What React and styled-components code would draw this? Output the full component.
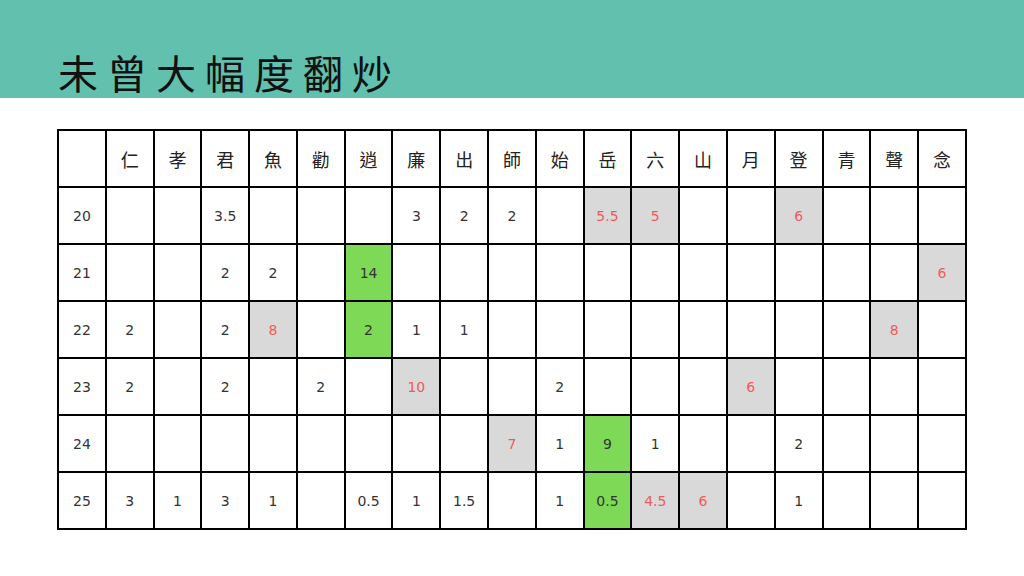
import React from 'react';
import styled, { createGlobalStyle } from 'styled-components';

const GlobalStyle = createGlobalStyle`
  html, body {
    margin: 0;
    padding: 0;
    background: #ffffff;
  }
`;

const heads = ['仁', '孝', '君', '魚', '勸', '逍', '廉', '出', '師', '始', '岳', '六', '山', '月', '登', '青', '聲', '念'];

// value per column; g = green, r = gray with red text
const rows = [
  { year: 20, cells: { 2: '3.5', 6: '3', 7: '2', 8: '2', 10: ['5.5', 'r'], 11: ['5', 'r'], 14: ['6', 'r'] } },
  { year: 21, cells: { 2: '2', 3: '2', 5: ['14', 'g'], 17: ['6', 'r'] } },
  { year: 22, cells: { 0: '2', 2: '2', 3: ['8', 'r'], 5: ['2', 'g'], 6: '1', 7: '1', 16: ['8', 'r'] } },
  { year: 23, cells: { 0: '2', 2: '2', 4: '2', 6: ['10', 'r'], 9: '2', 13: ['6', 'r'] } },
  { year: 24, cells: { 8: ['7', 'r'], 9: '1', 10: ['9', 'g'], 11: '1', 14: '2' } },
  { year: 25, cells: { 0: '3', 1: '1', 2: '3', 3: '1', 5: '0.5', 6: '1', 7: '1.5', 9: '1', 10: ['0.5', 'g'], 11: ['4.5', 'r'], 12: ['6', 'r'], 14: '1' } },
];

export default function App() {
  return (
    <Page>
      <GlobalStyle />
      <Banner>
        <Title>未曾大幅度翻炒</Title>
      </Banner>
      <Body>
        <Grid>
          <thead>
            <tr>
              <HeadCell />
              {heads.map((h) => (
                <HeadCell key={h}>{h}</HeadCell>
              ))}
            </tr>
          </thead>
          <tbody>
            {rows.map((r) => (
              <tr key={r.year}>
                <Cell>{r.year}</Cell>
                {heads.map((h, i) => {
                  const v = r.cells[i];
                  if (Array.isArray(v)) {
                    return (
                      <Cell key={h} $kind={v[1]}>
                        {v[0]}
                      </Cell>
                    );
                  }
                  return <Cell key={h}>{v || ''}</Cell>;
                })}
              </tr>
            ))}
          </tbody>
        </Grid>
      </Body>
    </Page>
  );
}

const Page = styled.div`
  width: 1024px;
  height: 576px;
  background: #ffffff;
  overflow: hidden;
`;

const Banner = styled.div`
  height: 98px;
  background: #62c0ae;
  display: flex;
  align-items: flex-end;
  padding-left: 58px;
  box-sizing: border-box;
`;

const Title = styled.h1`
  margin: 0 0 0 0;
  font-family: "Noto Sans CJK TC", "Noto Sans CJK SC", sans-serif;
  font-weight: 400;
  font-size: 40px;
  letter-spacing: 9px;
  line-height: 52px;
  color: #111;
`;

const Body = styled.div`
  padding: 31px 0 0 57px;
`;

const Grid = styled.table`
  border-collapse: collapse;
  table-layout: fixed;
  width: 910px;
`;

const HeadCell = styled.th`
  border: 2px solid #000;
  height: 55px;
  padding: 0;
  font-family: "Noto Sans CJK TC", "Noto Sans CJK SC", sans-serif;
  font-weight: 400;
  font-size: 18px;
  color: #222;
  text-align: center;
`;

const Cell = styled.td`
  border: 2px solid #000;
  height: 55px;
  padding: 0;
  font-family: "DejaVu Sans", "Liberation Sans", sans-serif;
  font-size: 14px;
  text-align: center;
  color: ${(p) => (p.$kind === 'r' ? '#f25a5a' : '#333')};
  background: ${(p) =>
    p.$kind === 'r' ? '#d9d9d9' : p.$kind === 'g' ? '#7ed957' : '#fff'};
`;
